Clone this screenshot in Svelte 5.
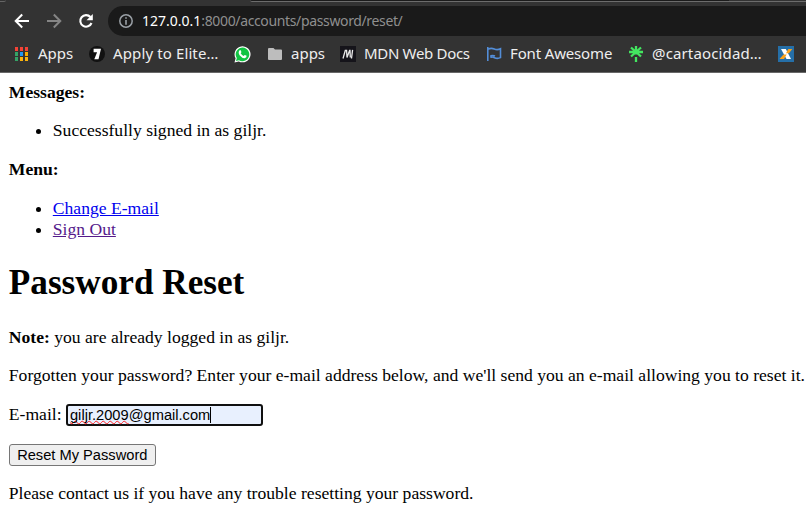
<script>
  const dots = ['#f44336', '#f44336', '#f44336', '#34a266', '#2196f3', '#f9ab00', '#34a266', '#fbb30d', '#fbb30d'];
</script>

<div class="browser">
  <header>
    <div class="tabs"><i class="left"></i><i class="mid"></i><i class="right"></i></div>
    <nav class="toolbar">
      <svg class="back" width="16" height="16" viewBox="0 0 16 16" fill="none" stroke="#fff" stroke-width="2"><path d="M15 8H2.3M8.2 1.5 1.7 8 8.2 14.5" /></svg>
      <svg class="forward" width="16" height="16" viewBox="0 0 16 16" fill="none" stroke="#858585" stroke-width="2"><path d="M1 8H13.7M7.8 1.5 14.3 8 7.8 14.5" /></svg>
      <svg class="reload" width="16" height="16" viewBox="0 0 16 16"><path d="M12.4 4A5.8 5.8 0 1 0 13.5 10" fill="none" stroke="#fff" stroke-width="2.1" /><path d="M14.8 1v6.3H8.5z" fill="#fff" /></svg>
      <div class="address">
        <svg width="14" height="14" viewBox="0 0 14 14"><circle cx="7" cy="7" r="6.2" fill="none" stroke="#9aa0a6" stroke-width="1.5" /><path d="M6.2 3.2h1.6v1.6H6.2zM6.2 6.1h1.6v4.7H6.2z" fill="#9aa0a6" /></svg>
        <span class="url"><b>127.0.0.1</b>:8000/accounts/password/reset/</span>
      </div>
    </nav>
    <nav class="bookmarks">
      <a class="apps">
        <svg width="14" height="14" viewBox="0 0 14 14" shape-rendering="crispEdges">
          {#each dots as color, i}
            <rect x={(i % 3) * 5} y={Math.floor(i / 3) * 5} width="3" height="4" fill={color} />
          {/each}
        </svg><span>Apps</span>
      </a>
      <a class="elite">
        <svg width="16" height="16" viewBox="0 0 16 16"><circle cx="8" cy="8" r="8" fill="#111" /><path d="M4.6 2.8H12L9.5 13.2H5.3L8.1 6.2H4.6z" fill="#fff" /></svg><span>Apply to Elite…</span>
      </a>
      <a class="whatsapp" aria-label="WhatsApp">
        <svg width="17" height="17" viewBox="0 0 17 17"><path d="M.5 16.5 1.6 12.3A8 8 0 1 1 4.8 15.4z" fill="#fff" /><path d="M2 15 2.8 12.1A6.8 6.8 0 1 1 5 14.2z" fill="#12c443" /><path d="M5.6 4.3Q6.5 3.8 6.8 4.6L7.4 6.1Q7.5 6.5 6.7 7.3 7.8 9.3 9.8 10.1L10.6 9.1Q10.9 8.8 12.6 9.8 12.9 11.8 10.7 12.2 8.1 12.2 5.8 9.4 3.6 6.5 5.6 4.3z" fill="#fff" /></svg>
      </a>
      <a class="folder">
        <svg width="14" height="12" viewBox="0 0 14 12"><path d="M1 0h4.5L7 1.5H13q1 0 1 1V11q0 1-1 1H1q-1 0-1-1V1Q0 0 1 0z" fill="#bdbdbd" /></svg><span>apps</span>
      </a>
      <a class="mdn">
        <svg width="16" height="16" viewBox="0 0 16 16"><path fill="#15141a" d="M0 0h16v16H0z" /><path d="M3 12.5 5.3 4.5H6.6L7 11.5 9.6 4.5H10L10.3 11.5M12.6 3.8 11.5 12.5" fill="none" stroke="#e9e9e9" stroke-width="1.3" /></svg><span>MDN Web Docs</span>
      </a>
      <a class="font">
        <svg width="15" height="15" viewBox="0 0 15 15" fill="none" stroke="#538dd7" stroke-width="1.6"><path d="M.8 0v14M.8 2.4Q4 .6 7.2 2T13.5 1.8V10.6Q10.5 12 7.5 10.7T4 10.8V8.8Q6 8 8 9" /></svg><span>Font Awesome</span>
      </a>
      <a class="tree">
        <svg width="14" height="16" viewBox="0 0 14 16"><path d="M7 0V8.5M7 11V16M0 6H14M2 1.5 12 10.5M12 1.5 2 10.5" fill="none" stroke="#43e660" stroke-width="2.3" /></svg><span>@cartaocidad…</span>
      </a>
      <a class="xbox" aria-label="Caixa">
        <svg width="16" height="16" viewBox="0 0 16 16"><path fill="#256fa8" d="M0 0h16v16H0z" /><path d="M3 3h4.8L13 13H8.5z" fill="#fff" /><path d="M10.3 3h4L11 7.3H8zM5.5 8.4H8.7L6 13H1.5z" fill="#f9a11b" /></svg>
      </a>
    </nav>
  </header>

  <main>
    <strong>Messages:</strong>
    <ul><li>Successfully signed in as giljr.</li></ul>
    <strong>Menu:</strong>
    <ul>
      <li><a class="link">Change E-mail</a></li>
      <li><a class="link visited">Sign Out</a></li>
    </ul>
    <h1>Password Reset</h1>
    <p><strong>Note:</strong> you are already logged in as giljr.</p>
    <p class="long">Forgotten your password? Enter your e-mail address below, and we'll send you an e-mail allowing you to reset it.</p>
    <p class="row">E-mail: <span class="field"><span class="typo">giljr.2009</span>@gmail.com<i class="caret"></i></span></p>
    <button type="button">Reset My Password</button>
    <p class="contact">Please contact us if you have any trouble resetting your password.</p>
  </main>
</div>

<style>
  :global(body) { margin: 0; background: #fff; overflow: hidden; }
  .browser { width: 806px; height: 528px; overflow: hidden; }
  header { box-sizing: border-box; height: 73px; background: #333; border-bottom: 1px solid #686868; font-family: "Noto Sans", sans-serif; overflow: hidden; }
  .tabs { height: 6px; display: flex; align-items: flex-start; }
  .tabs i { height: 2px; box-sizing: border-box; }
  .left { width: 6px; border-bottom: 1px solid #666; border-radius: 0 0 5px 0; }
  .mid { width: 479px; margin-left: 244px; border-bottom: 1px solid #6c6c6c; background: #1b1b1b; border-radius: 0 0 0 3px; }
  .right { flex: 1; border-bottom: 1px solid #6c6c6c; }
  .toolbar { height: 30px; display: flex; align-items: center; padding-left: 14px; }
  .forward { margin-left: 16px; }
  .reload { margin-left: 16px; }
  .address { height: 30px; flex: 1; margin-left: 14px; display: flex; align-items: center; background: #1a1a1a; border-radius: 15px 0 0 15px; padding-left: 11px; }
  .url { margin-left: 9px; color: #8f8f8f; font-size: 14px; line-height: 20px; margin-top: -1px; letter-spacing: -.36px; white-space: nowrap; }
  .url b { color: #fff; font-weight: 400; letter-spacing: 0; }
  .bookmarks { display: flex; height: 36px; align-items: center; padding-left: 15px; }
  .bookmarks a { display: flex; align-items: center; flex: none; color: #eee; font-size: 15px; line-height: 20px; white-space: nowrap; }
  .bookmarks span { margin-top: -2px; }
  .apps { width: 74px; } .apps span { margin-left: 9px; }
  .elite { width: 145px; } .elite span { margin-left: 8px; letter-spacing: .12px; }
  .whatsapp { width: 34px; }
  .folder { width: 72px; } .folder span { margin-left: 9px; }
  .mdn { width: 147px; } .mdn span { margin-left: 8px; letter-spacing: -.32px; }
  .font { width: 142px; } .font span { margin-left: 8px; letter-spacing: -.15px; }
  .tree { width: 149px; } .tree span { margin-left: 9px; letter-spacing: .14px; }
  svg { display: block; flex: none; }

  main { padding: 8.8px; font-family: "Liberation Serif", serif; font-size: 17.6px; color: #000; }
  ul { margin: 17.6px 0; padding-left: 44px; }
  h1 { font-size: 35.2px; margin: 23.6px 0; }
  p { margin: 17.6px 0; }
  .long { white-space: nowrap; }
  .contact { margin-top: 16.8px; }
  .link { color: #00e; text-decoration: underline; }
  .visited { color: #551a8b; }
  .field { display: inline-flex; align-items: center; box-sizing: border-box; width: 197px; height: 22px; border: 2px solid #101010; border-radius: 3px; background: #e8f0fe; padding-left: 2px; font: 14.667px/17px "Liberation Sans", sans-serif; }
  .typo { text-decoration: underline wavy #f22 1px; text-underline-offset: 0; text-decoration-skip-ink: none; }
  .caret { width: 1px; height: 16px; background: #000; }
  button { display: block; box-sizing: border-box; width: 147px; height: 22px; padding: 0; border: 1px solid #767676; border-radius: 3px; background: #efefef; color: #000; font: 14.667px "Liberation Sans", sans-serif; }
</style>
